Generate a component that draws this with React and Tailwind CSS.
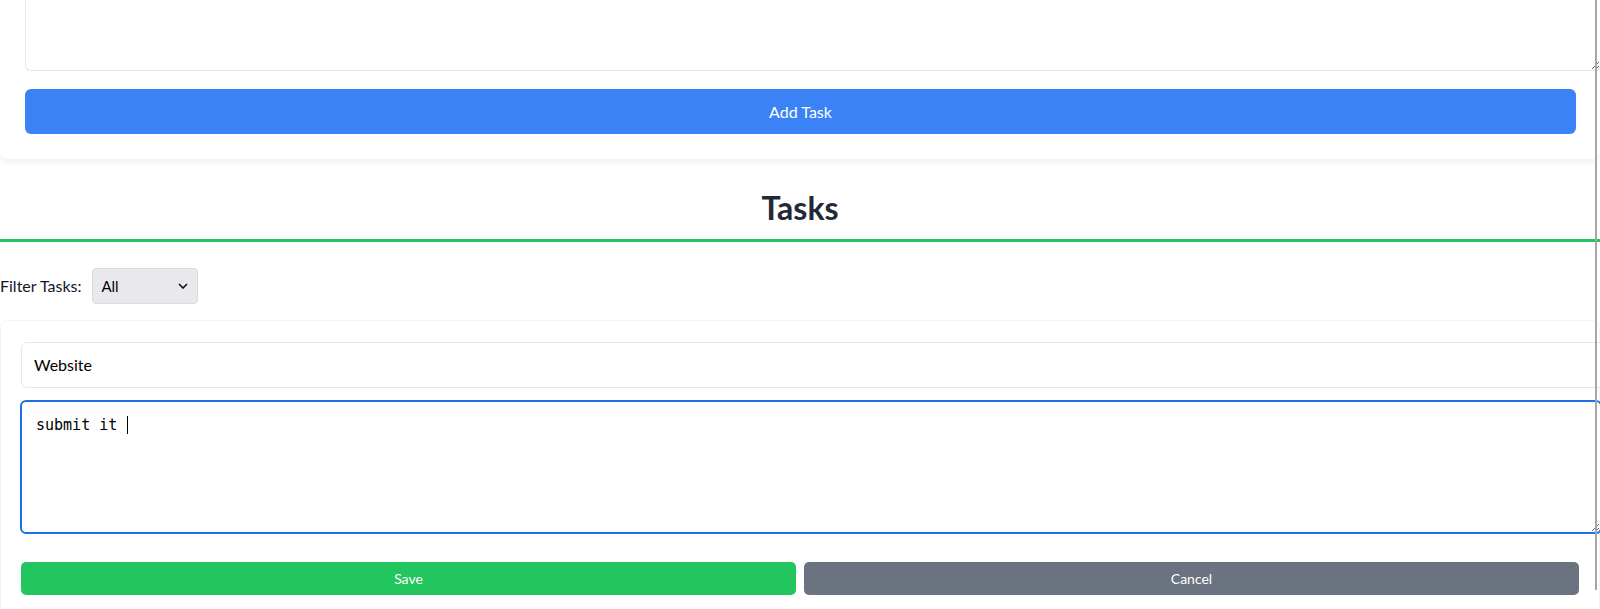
import React from "react";

export default function App() {
  return (
    <div className="relative w-[1600px] h-[609px] overflow-hidden bg-white font-['Lato','Liberation_Sans',sans-serif] text-[#111827]">
      {/* Top add-task card (scrolled, top cut off) */}
      <div className="rounded-b-lg bg-white pl-[25px] pr-[24px] pb-[25px] shadow-[0_3px_6px_rgba(0,0,0,0.07)]">
        <textarea
          readOnly
          className="block h-[71px] w-[calc(100%+25px)] rounded-b-md border border-t-0 border-[#e5e7eb] bg-white outline-none"
        />
        <button className="mt-[18px] flex h-[45px] w-full items-center justify-center rounded-md bg-[#3b82f6] text-[16px] text-white">
          Add Task
        </button>
      </div>

      {/* Heading */}
      <h2 className="mt-[29px] border-b-[3px] border-[#22c55e] pb-[11px] text-center text-[32px] font-bold leading-[40px] text-[#1f2937]">
        Tasks
      </h2>

      {/* Filter */}
      <div className="mt-[26px] flex items-center gap-[11px]">
        <span className="text-[16px] text-[#111827]">Filter Tasks:</span>
        <div className="relative h-[36px] w-[106px] rounded-[4px] border border-[#dcdce0] bg-[#e9e9ed]">
          <span className="absolute left-[8px] top-1/2 -translate-y-1/2 text-[15px] text-black">All</span>
          <svg
            className="absolute right-[9px] top-1/2 -translate-y-1/2"
            width="10"
            height="6"
            viewBox="0 0 10 6"
          >
            <path d="M1 1 L5 5 L9 1" fill="none" stroke="#111" strokeWidth="1.6" />
          </svg>
        </div>
      </div>

      {/* Task edit card */}
      <div className="mt-[16px] rounded-lg border border-[#f3f4f6] px-[20px] pt-[21px] pb-[20px]">
        <div className="flex h-[46px] w-[calc(100%+30px)] items-center rounded-md border border-[#e5e7eb] bg-white px-[12px] text-[16px] text-black">
          Website
        </div>
        <div className="relative mt-[12px] -ml-px">
          <textarea
            readOnly
            value="submit it "
            className="block h-[134px] w-[calc(100%+23px)] resize rounded-md border-2 border-[#1f6fe5] bg-white px-[14px] pt-[13px] font-['DejaVu_Sans_Mono','Liberation_Mono',monospace] text-[15px] leading-[20px] text-black outline-none"
          />
          <span className="absolute left-[107px] top-[16px] h-[18px] w-px bg-black" />
        </div>
        <div className="mt-[28px] flex gap-2">
          <button className="flex h-[33px] flex-1 items-center justify-center rounded-[5px] bg-[#22c55e] text-[14px] text-white">
            Save
          </button>
          <button className="flex h-[33px] flex-1 items-center justify-center rounded-[5px] bg-[#6b7280] text-[14px] text-white">
            Cancel
          </button>
        </div>
      </div>

      {/* vertical gray rule at right edge */}
      <div className="absolute left-[1595px] top-0 h-[590px] w-[2px] bg-[#a6a6a6]" />
    </div>
  );
}
